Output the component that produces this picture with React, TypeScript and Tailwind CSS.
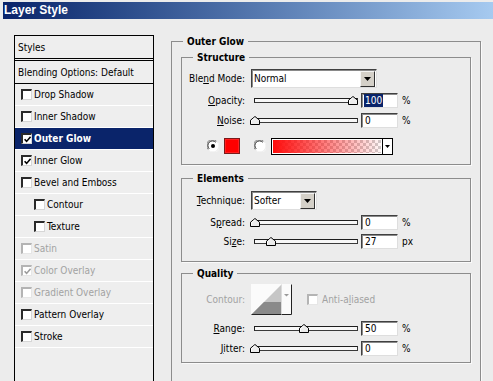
import type { ReactNode } from 'react';

type StyleItem = { name: string; checked?: boolean; selected?: boolean; disabled?: boolean; indent?: boolean };

const styleItems: StyleItem[] = [
  { name: 'Drop Shadow' },
  { name: 'Inner Shadow' },
  { name: 'Outer Glow', checked: true, selected: true },
  { name: 'Inner Glow', checked: true },
  { name: 'Bevel and Emboss' },
  { name: 'Contour', indent: true },
  { name: 'Texture', indent: true },
  { name: 'Satin', disabled: true },
  { name: 'Color Overlay', checked: true, disabled: true },
  { name: 'Gradient Overlay', disabled: true },
  { name: 'Pattern Overlay' },
  { name: 'Stroke' },
];

function CheckBox({ checked = false, disabled = false }: { checked?: boolean; disabled?: boolean }) {
  return (
    <span
      className={`flex h-[11px] w-[11px] shrink-0 items-center justify-center border-t-2 border-l-2 border-r border-b bg-white ${
        disabled
          ? 'border-t-[#b4b4b4] border-l-[#b4b4b4] border-r-[#e6e6e6] border-b-[#e6e6e6]'
          : 'border-t-[#2a2a2a] border-l-[#2a2a2a] border-r-[#d6d6d6] border-b-[#d6d6d6]'
      }`}
    >
      {checked && (
        <svg width="7" height="7" viewBox="0 0 7 7">
          <path d="M0.6 3.2 L2.6 5.4 L6.6 0.8" fill="none" stroke={disabled ? '#9c9c9c' : '#000'} strokeWidth="1.6" />
        </svg>
      )}
    </span>
  );
}

function Radio({ on = false }: { on?: boolean }) {
  return (
    <svg width="12" height="12" viewBox="0 0 12 12" className="shrink-0">
      <circle cx="6" cy="6" r="5.5" fill="#fff" />
      <path d="M1.2 9.5 A5.2 5.2 0 0 1 9.5 1.2" fill="none" stroke="#8a8a8a" strokeWidth="1" />
      <path d="M2.2 8.8 A4.2 4.2 0 0 1 8.8 2.2" fill="none" stroke="#1a1a1a" strokeWidth="1" />
      <path d="M10.8 2.5 A5.2 5.2 0 0 1 2.5 10.8" fill="none" stroke="#f4f4f4" strokeWidth="1" />
      {on && <circle cx="6" cy="6" r="2" fill="#000" />}
    </svg>
  );
}

function Thumb({ left }: { left: number }) {
  return (
    <svg width="10" height="9" viewBox="0 0 10 9" className="absolute top-[3px]" style={{ left }}>
      <path d="M5 0.5 L9.5 4.2 V8.5 H0.5 V4.2 Z" fill="#ececec" stroke="#000" strokeWidth="1" />
      <path d="M1.5 7.5 V4.6 L5 1.8" fill="none" stroke="#fff" strokeWidth="1" />
    </svg>
  );
}

function Field({ value, selected = false }: { value: string; selected?: boolean }) {
  return (
    <div className="ml-[3px] flex h-[15px] w-[37px] items-center border border-t-[#404040] border-l-[#404040] border-r-[#dedede] border-b-[#dedede] bg-white pl-[2px] shadow-[inset_1px_1px_0_#8a8a8a]">
      {selected ? <span className="bg-[#0a246a] px-[1px] text-white">{value}</span> : <span className="px-[1px]">{value}</span>}
    </div>
  );
}

function SliderRow({
  label,
  value,
  unit,
  thumb,
  selected,
  className,
}: {
  label: ReactNode;
  value: string;
  unit: string;
  thumb: number;
  selected?: boolean;
  className: string;
}) {
  return (
    <div className={`flex h-[15px] items-center ${className}`}>
      <span className="w-[57px] text-right">{label}</span>
      <div className="relative ml-[6px] flex h-[15px] w-[107px] items-center pl-[3px]">
        <div className="h-[5px] w-[104px] border border-t-[#1e1e1e] border-l-[#1e1e1e] border-r-[#3a3a3a] border-b-[#3a3a3a] bg-[#f7f7f7]" />
        <Thumb left={thumb} />
      </div>
      <Field value={value} selected={selected} />
      <span className="ml-[4px]">{unit}</span>
    </div>
  );
}

function Select({ value, wide }: { value: string; wide: boolean }) {
  return (
    <div
      className={`ml-[6px] flex h-[19px] items-center border border-t-[#404040] border-l-[#404040] border-r-[#dedede] border-b-[#dedede] bg-white pl-[2px] shadow-[inset_1px_1px_0_#8a8a8a] ${
        wide ? 'w-[126px]' : 'w-[66px]'
      }`}
    >
      <span className="flex-1">{value}</span>
      <span className="mr-[1px] flex h-[16px] w-[15px] items-center justify-center border border-t-[#f4f4f4] border-l-[#f4f4f4] border-r-[#303030] border-b-[#303030] bg-[#d4d0c8]">
        <svg width="7" height="4" viewBox="0 0 7 4">
          <path d="M0 0 H7 L3.5 4 Z" fill="#000" />
        </svg>
      </span>
    </div>
  );
}

function ContourPreview() {
  return (
    <svg width="41" height="31" viewBox="0 0 41 31" className="ml-[6px] shrink-0">
      <rect x="0" y="0" width="41" height="31" fill="#fbfbfb" />
      <path d="M0.5 30.5 L30.5 0.5 V30.5 Z" fill="#c6c6c6" />
      <path d="M0.5 30.5 L13 18 H30.5 V30.5 Z" fill="#8a8a8a" />
      <path d="M0.5 30.5 H40.5 V0.5" fill="none" stroke="#222" strokeWidth="1" />
      <path d="M30.5 0.5 V30.5" fill="none" stroke="#dcdcdc" strokeWidth="1" />
      <path d="M33 10 H38 L35.5 12.5 Z" fill="#9a9a9a" />
    </svg>
  );
}

export default function App() {
  return (
    <div className="flex h-[381px] w-[493px] flex-col overflow-hidden bg-[#ececec] pl-[3px] pt-[2px] font-['DejaVu_Sans_Condensed','Liberation_Sans',sans-serif] text-[10px] leading-[13px] text-black">
      <div className="flex h-[17px] shrink-0 items-center bg-gradient-to-r from-[#0a246a] to-[#a6caf0] pl-[1px] font-['Liberation_Sans',sans-serif] text-[12px] font-bold text-white">
        Layer Style
      </div>

      <div className="flex min-h-0 flex-1 pt-[16px]">
        {/* styles list */}
        <div className="ml-[11px] flex h-[400px] w-[140px] shrink-0 flex-col border border-black bg-[#eeeeee]">
          <div className="flex h-[25px] items-center border-b-[3px] border-double border-black pl-[3px]">Styles</div>
          <div className="flex h-[23px] items-center border-b border-black pl-[3px]">Blending Options: Default</div>
          {styleItems.map((s) => (
            <div
              key={s.name}
              className={`flex h-[22px] items-center gap-[2px] border-b border-white ${s.indent ? 'pl-[19px]' : 'pl-[6px]'} ${
                s.selected ? 'bg-[#0a246a] font-bold text-white' : s.disabled ? 'text-[#a2a2a2]' : ''
              }`}
            >
              <CheckBox checked={s.checked} disabled={s.disabled} />
              <span>{s.name}</span>
            </div>
          ))}
        </div>

        {/* options */}
        <fieldset className="ml-[17px] h-[400px] w-[310px] shrink-0 border border-[#8c8c8c] px-[9px] pt-[3px] shadow-[1px_1px_0_#fafafa]">
          <legend className="ml-[2px] px-[4px] font-bold">Outer Glow</legend>

          <fieldset className="border border-[#8c8c8c] pb-[9px] pl-[6px] shadow-[1px_1px_0_#fafafa]">
            <legend className="ml-[5px] px-[4px] font-bold">Structure</legend>
            <div className="mt-[5px] flex h-[19px] items-center">
              <span className="w-[57px] text-right">
                Ble<u>n</u>d Mode:
              </span>
              <Select value="Normal" wide />
            </div>
            <SliderRow
              className="mt-[5px]"
              label={
                <>
                  <u>O</u>pacity:
                </>
              }
              value="100"
              unit="%"
              thumb={97}
              selected
            />
            <SliderRow
              className="mt-[5px]"
              label={
                <>
                  <u>N</u>oise:
                </>
              }
              value="0"
              unit="%"
              thumb={-1}
            />
            <div className="mt-[9px] flex h-[18px] items-center">
              <span className="ml-[19px] flex">
                <Radio on />
              </span>
              <span className="ml-[5px] h-[16px] w-[16px] border border-[#7a1a1a] bg-[#ff0000] shadow-[inset_0_0_0_1px_#ff2020]" />
              <span className="ml-[14px] flex">
                <Radio />
              </span>
              <div className="ml-[5px] flex h-[17px] w-[122px] border border-black bg-white">
                <div className="m-[1px] flex-1 bg-[linear-gradient(to_right,#ff0c0c,rgba(255,40,40,0.04)),repeating-conic-gradient(#cfcfcf_0_25%,#ffffff_0_50%)] bg-[length:100%_100%,6px_6px]" />
                <div className="flex w-[10px] items-center justify-center border-l border-black">
                  <svg width="5" height="3" viewBox="0 0 5 3">
                    <path d="M0 0 H5 L2.5 3 Z" fill="#000" />
                  </svg>
                </div>
              </div>
            </div>
          </fieldset>

          <fieldset className="mt-[7px] border border-[#8c8c8c] pb-[12px] pl-[6px] shadow-[1px_1px_0_#fafafa]">
            <legend className="ml-[5px] px-[4px] font-bold">Elements</legend>
            <div className="mt-[6px] flex h-[19px] items-center">
              <span className="w-[57px] text-right">
                <u>T</u>echnique:
              </span>
              <Select value="Softer" wide={false} />
            </div>
            <SliderRow
              className="mt-[5px]"
              label={
                <>
                  S<u>p</u>read:
                </>
              }
              value="0"
              unit="%"
              thumb={-1}
            />
            <SliderRow
              className="mt-[4px]"
              label={
                <>
                  Si<u>z</u>e:
                </>
              }
              value="27"
              unit="px"
              thumb={15}
            />
          </fieldset>

          <fieldset className="mt-[5px] border border-[#8c8c8c] pb-[6px] pl-[6px] shadow-[1px_1px_0_#fafafa]">
            <legend className="ml-[5px] px-[4px] font-bold">Quality</legend>
            <div className="mt-[4px] flex h-[31px] items-center">
              <span className="w-[57px] text-right text-[#a2a2a2]">Contour:</span>
              <ContourPreview />
              <span className="ml-[15px] flex">
                <CheckBox disabled />
              </span>
              <span className="ml-[4px] text-[#a2a2a2]">
                Anti-a<u>l</u>iased
              </span>
            </div>
            <SliderRow
              className="mt-[6px]"
              label={
                <>
                  <u>R</u>ange:
                </>
              }
              value="50"
              unit="%"
              thumb={48}
            />
            <SliderRow
              className="mt-[5px]"
              label={
                <>
                  <u>J</u>itter:
                </>
              }
              value="0"
              unit="%"
              thumb={-1}
            />
          </fieldset>
        </fieldset>
      </div>
    </div>
  );
}
